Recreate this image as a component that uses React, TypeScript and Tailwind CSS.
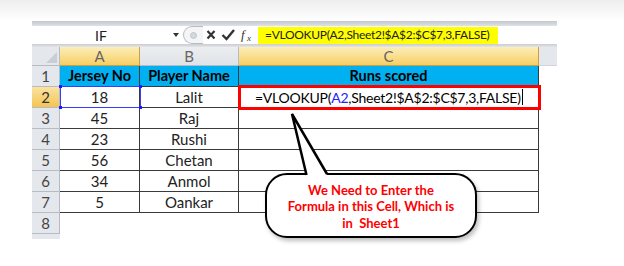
import React from 'react';

const font = { fontFamily: 'Lato, "Open Sans", Arial, sans-serif' };

const rows = [
  { n: 2, a: '18', b: 'Lalit' },
  { n: 3, a: '45', b: 'Raj' },
  { n: 4, a: '23', b: 'Rushi' },
  { n: 5, a: '56', b: 'Chetan' },
  { n: 6, a: '34', b: 'Anmol' },
  { n: 7, a: '5', b: 'Oankar' },
];

function RowHead({ n, active }: { n: number; active?: boolean }) {
  return (
    <div
      className={`w-[28px] shrink-0 flex items-center justify-center border-r border-b border-[#b6bcc6] text-[15px] ${
        active ? 'bg-gradient-to-b from-[#fbe3a0] to-[#f3c450] text-[#333]' : 'bg-[#e4e7ec] text-[#444]'
      }`}
    >
      {n}
    </div>
  );
}

export default function App() {
  return (
    <div className="relative w-[624px] h-[266px] bg-white overflow-hidden" style={font}>
      <div className="h-[21px] bg-gradient-to-b from-[#eeeeee] to-white" />

      <div className="ml-[32px] w-[525px]">
        {/* formula bar */}
        <div className="h-[5px] bg-gradient-to-b from-[#c4c8ce] to-[#dfe2e6]" />
        <div className="h-[18px] flex items-center bg-white">
          <div className="w-[138px] text-center text-[14px] text-[#222]">IF</div>
          <div className="w-0 h-0 border-l-[3px] border-r-[3px] border-t-[4px] border-l-transparent border-r-transparent border-t-[#333] ml-[3px]" />
          <div className="ml-[4px] h-[18px] w-[20px] rounded-l-full border-l border-t border-b border-[#b9bdc3] bg-[#f4f5f6] flex items-center justify-center">
            <div className="w-[7px] h-[7px] rounded-full bg-[#d4d7db] border border-[#c2c6cb]" />
          </div>
          <svg width="53" height="18" viewBox="0 0 53 18" className="ml-[2px] shrink-0">
            <path d="M2.5 5 L9.5 12.5 M9.5 5 L2.5 12.5" stroke="#333" strokeWidth="2.2" />
            <path d="M17.5 9 L21.5 13 L29 4" stroke="#333" strokeWidth="2.4" fill="none" />
            <text x="36" y="13" fontSize="13" fontStyle="italic" fontFamily="Liberation Serif, serif" fill="#333">f</text>
            <text x="42" y="14.5" fontSize="9" fontStyle="italic" fontFamily="Liberation Serif, serif" fill="#333">x</text>
          </svg>
          <div className="h-[17px] w-[240px] shrink-0 bg-[#ffff00] flex items-center pl-[7px] text-[12px] tracking-[-0.3px] text-[#222] whitespace-nowrap">
            =VLOOKUP(A2,Sheet2!$A$2:$C$7,3,FALSE)
          </div>
        </div>
        <div className="h-[3px] bg-gradient-to-b from-[#c9ccd1] to-[#e3e5e8]" />

        {/* column header */}
        <div className="flex h-[19px] text-[15px] text-[#666]">
          <div className="w-[28px] bg-[#e4e7ec] border-r border-b border-[#b6bcc6] flex items-end justify-end p-[2px]">
            <div className="w-0 h-0 border-b-[11px] border-l-[11px] border-l-transparent border-b-[#c9ced6]" />
          </div>
          <div className="w-[80px] bg-gradient-to-b from-[#fdeeb8] to-[#f6cf62] border-r border-b border-[#c5a14c] flex items-center justify-center">A</div>
          <div className="w-[99px] bg-gradient-to-b from-[#eceef1] to-[#dfe2e7] border-r border-b border-[#b6bcc6] flex items-center justify-center">B</div>
          <div className="w-[300px] bg-gradient-to-b from-[#fdeeb8] to-[#f6cf62] border-r border-b border-[#c5a14c] flex items-center justify-center">C</div>
          <div className="w-[18px] bg-[#e4e7ec] border-b border-[#d0d4da]" />
        </div>

        {/* data */}
        <div className="relative">
          <div className="flex h-[21px]">
            <RowHead n={1} />
            <div className="w-[80px] bg-[#00b0f0] border-r border-b border-[#3a3a3a] flex items-center justify-center font-bold text-[14.5px] text-black">Jersey No</div>
            <div className="w-[99px] bg-[#00b0f0] border-r border-b border-[#3a3a3a] flex items-center justify-center font-bold text-[14.5px] text-black">Player Name</div>
            <div className="w-[300px] bg-[#00b0f0] border-r border-b border-[#3a3a3a] flex items-center justify-center font-bold text-[14.5px] text-black">Runs scored</div>
          </div>
          {rows.map((r) => (
            <div key={r.n} className="flex h-[21px] text-[15px] text-[#222]">
              <RowHead n={r.n} active={r.n === 2} />
              <div className="w-[80px] border-r border-b border-[#3a3a3a] flex items-center justify-center">{r.a}</div>
              <div className="w-[99px] border-r border-b border-[#3a3a3a] flex items-center justify-center">{r.b}</div>
              <div className="w-[300px] border-r border-b border-[#3a3a3a] flex items-center pl-[16px] whitespace-nowrap text-[14px] tracking-[-0.25px]">
                {r.n === 2 && (
                  <>
                    <span className="text-black">=VLOOKUP(</span>
                    <span className="text-[#2323ff]">A2</span>
                    <span className="text-black">,Sheet2!$A$2:$C$7,3,FALSE)</span>
                    <span className="ml-[1px] w-px h-[16px] bg-black" />
                  </>
                )}
              </div>
            </div>
          ))}
          <div className="flex h-[21px]">
            <RowHead n={8} />
          </div>
          <div className="w-[28px] h-[5px] bg-[#e4e7ec]" />

          {/* A2 selection */}
          <div className="absolute left-[28px] top-[20px] w-[81px] h-[22px] border border-[#3b3bff]">
            <div className="absolute -left-[2px] -top-[2px] w-[3px] h-[3px] bg-[#1a1aff]" />
            <div className="absolute -right-[2px] -top-[2px] w-[3px] h-[3px] bg-[#1a1aff]" />
            <div className="absolute -left-[2px] -bottom-[2px] w-[3px] h-[3px] bg-[#1a1aff]" />
            <div className="absolute -right-[2px] -bottom-[2px] w-[3px] h-[3px] bg-[#1a1aff]" />
          </div>
          {/* C2 red box */}
          <div className="absolute left-[206px] top-[19px] w-[303px] h-[25px] border-[3px] border-[#ff0000]" />
        </div>
      </div>

      {/* callout */}
      <div className="absolute left-[265px] top-[173px] w-[212px] h-[65px] rounded-[22px] border-[2.5px] border-black bg-white shadow-[2px_3px_4px_rgba(0,0,0,0.25)] flex flex-col items-center justify-center pt-[2px] text-[13px] leading-[16.5px] font-bold text-[#ff0000]">
        <div>We Need to Enter the</div>
        <div>Formula in this Cell, Which is</div>
        <div className="whitespace-pre">in  Sheet1</div>
      </div>
      <svg className="absolute left-[285px] top-[108px]" width="50" height="70" viewBox="0 0 50 70">
        <polygon points="22,67 7,6 42,67" fill="white" />
        <path d="M21.5,67 L7,6 L42,66" stroke="black" strokeWidth="2.5" fill="none" strokeLinejoin="miter" />
      </svg>
    </div>
  );
}
